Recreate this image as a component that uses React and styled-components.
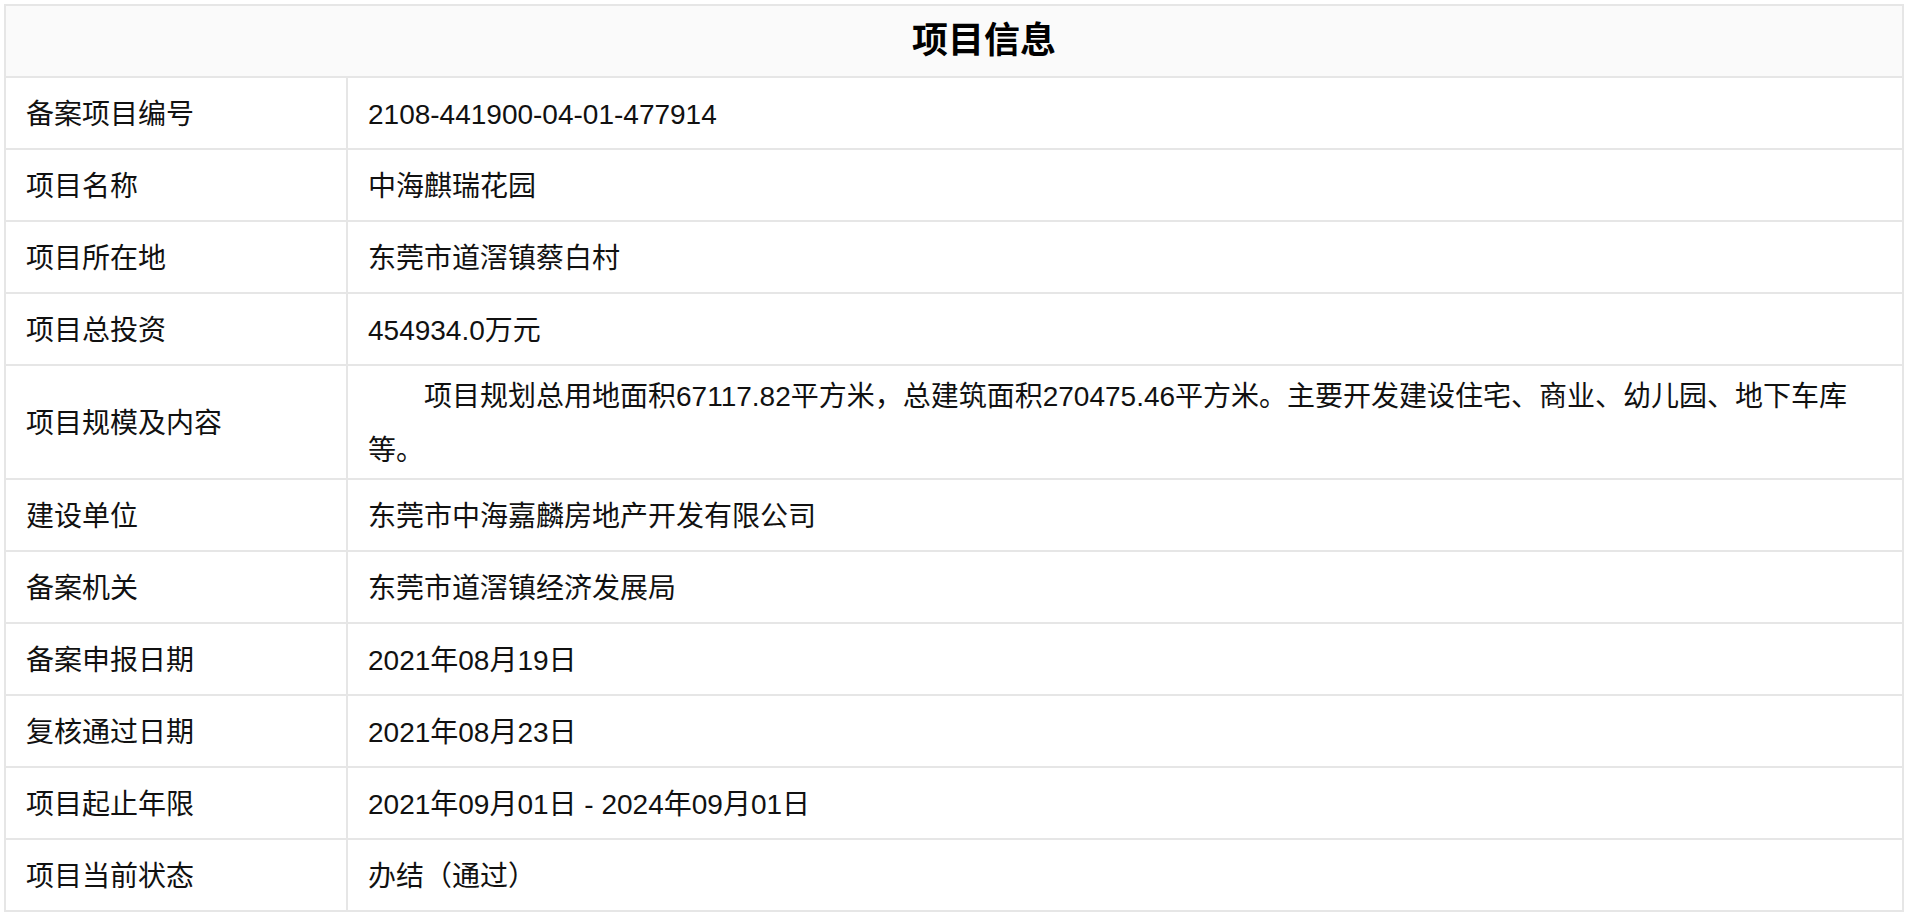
import React from "react";
import styled, { createGlobalStyle } from "styled-components";

const GlobalStyle = createGlobalStyle`
  html, body {
    margin: 0;
    padding: 0;
    background: #ffffff;
  }
  body {
    font-family: "Liberation Sans", "Noto Sans CJK SC", sans-serif;
    color: #000;
  }
`;

const Page = styled.div`
  padding: 4px 6px 6px 4px;
`;

const Table = styled.table`
  width: 100%;
  border-collapse: collapse;
  border: 2px solid #e6e6e6;
  table-layout: fixed;
  font-size: 28px;
`;

const LabelCol = styled.col`
  width: 342px;
`;

const HeaderCell = styled.th`
  height: 70px;
  padding: 0 0 0 60px;
  background: #fafafa;
  border: 2px solid #e6e6e6;
  font-size: 36px;
  font-weight: 700;
  line-height: 40px;
  text-align: center;
  vertical-align: middle;
  color: #000;
`;

const LabelCell = styled.td`
  height: ${(p) => (p.$tall ? "109px" : "67px")};
  padding: 3px 20px 0;
  border: 2px solid #e6e6e6;
  line-height: 54px;
  vertical-align: middle;
  color: #111;
`;

const ValueCell = styled.td`
  padding: 3px 20px 0;
  border: 2px solid #e6e6e6;
  line-height: 54px;
  vertical-align: middle;
  color: #111;
  text-indent: ${(p) => (p.$indent ? "2em" : "0")};
  line-break: strict;
`;

const rows = [
  ["备案项目编号", "2108-441900-04-01-477914"],
  ["项目名称", "中海麒瑞花园"],
  ["项目所在地", "东莞市道滘镇蔡白村"],
  ["项目总投资", "454934.0万元"],
  [
    "项目规模及内容",
    "项目规划总用地面积67117.82平方米，总建筑面积270475.46平方米。主要开发建设住宅、商业、幼儿园、地下车库等。",
    true,
  ],
  ["建设单位", "东莞市中海嘉麟房地产开发有限公司"],
  ["备案机关", "东莞市道滘镇经济发展局"],
  ["备案申报日期", "2021年08月19日"],
  ["复核通过日期", "2021年08月23日"],
  ["项目起止年限", "2021年09月01日 - 2024年09月01日"],
  ["项目当前状态", "办结（通过）"],
];

export default function App() {
  return (
    <>
      <GlobalStyle />
      <Page>
        <Table>
          <colgroup>
            <LabelCol />
            <col />
          </colgroup>
          <thead>
            <tr>
              <HeaderCell colSpan={2}>项目信息</HeaderCell>
            </tr>
          </thead>
          <tbody>
            {rows.map(([label, value, tall]) => (
              <tr key={label}>
                <LabelCell $tall={tall}>{label}</LabelCell>
                <ValueCell $indent={tall}>{value}</ValueCell>
              </tr>
            ))}
          </tbody>
        </Table>
      </Page>
    </>
  );
}
